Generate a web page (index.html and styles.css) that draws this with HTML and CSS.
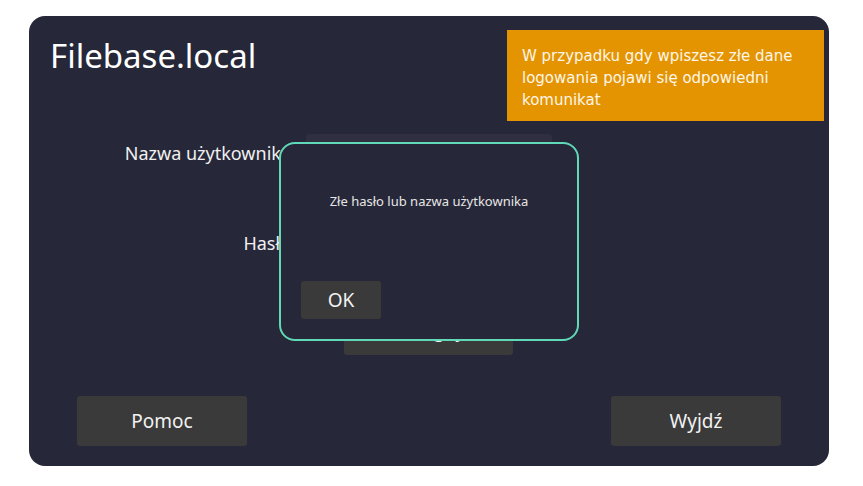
FILE: index.html
```html
<!DOCTYPE html>
<html lang="pl">
<head>
<meta charset="utf-8">
<title>Filebase.local</title>
<link rel="stylesheet" href="styles.css">
</head>
<body>
<div class="window">
  <h1 class="title">Filebase.local</h1>
  <div class="form">
    <div class="row">
      <label class="label">Nazwa użytkownika</label>
      <div class="input"></div>
    </div>
    <div class="row">
      <label class="label">Hasło</label>
      <div class="input"></div>
    </div>
    <div class="login-row">
      <button class="btn login">Zaloguj</button>
    </div>
  </div>
  <div class="bottom">
    <button class="btn big">Pomoc</button>
    <button class="btn big">Wyjdź</button>
  </div>
  <div class="callout">W przypadku gdy wpiszesz złe dane logowania pojawi się odpowiedni komunikat</div>
  <div class="dialog">
    <p class="msg">Złe hasło lub nazwa użytkownika</p>
    <button class="btn ok">OK</button>
  </div>
</div>
</body>
</html>
```
FILE: styles.css
```css
* { box-sizing: border-box; }
html, body { margin: 0; padding: 0; background: #ffffff; }
body { padding: 16px 0 0 29px; font-family: "Noto Sans", "DejaVu Sans", sans-serif; }
.window {
  position: relative;
  width: 800px;
  height: 450px;
  background: #262738;
  border-radius: 16px;
  padding: 0 48px 20px 48px;
  display: flex;
  flex-direction: column;
  color: #f2f2f2;
}
.title {
  margin: 18px 0 0 -27px;
  font-size: 33px;
  font-weight: 400;
  line-height: 44px;
  color: #ffffff;
}
.form {
  display: flex;
  flex-direction: column;
  margin-top: 56px;
  flex: 1;
}
.row {
  display: flex;
  align-items: center;
  height: 38px;
  margin-bottom: 52px;
}
.label {
  width: 229px;
  text-align: right;
  font-size: 18px;
  padding-right: 15px;
  color: #f0f0f0;
}
.input {
  width: 246px;
  height: 38px;
  background: #302f41;
  border-radius: 3px;
}
.btn {
  border: 0;
  background: #3a3a3a;
  color: #f2f2f2;
  font-family: "Noto Sans", "DejaVu Sans", sans-serif;
  border-radius: 3px;
}
.login-row { display: flex; padding-left: 267px; margin-top: -9px; }
.login { width: 169px; height: 50px; font-size: 19px; }
.bottom {
  display: flex;
  justify-content: space-between;
}
.big { width: 170px; height: 50px; font-size: 19px; }
.callout {
  position: absolute;
  left: 478px;
  top: 14px;
  width: 317px;
  height: 91px;
  background: #e49400;
  color: #fdf6ea;
  font-family: "DejaVu Sans", sans-serif;
  font-size: 15px;
  line-height: 22px;
  padding: 15px 10px 0 15px;
}
.dialog {
  position: absolute;
  left: 250px;
  top: 126px;
  width: 300px;
  height: 199px;
  background: #262738;
  border: 2px solid #5fd9b8;
  border-radius: 16px;
  display: flex;
  flex-direction: column;
  align-items: center;
  padding: 0 20px;
}
.msg {
  margin: 48px 0 0 0;
  font-size: 13px;
  color: #e6e6e6;
}
.ok {
  align-self: flex-start;
  margin-top: 71px;
  width: 80px;
  height: 38px;
  font-size: 19px;
}
```
